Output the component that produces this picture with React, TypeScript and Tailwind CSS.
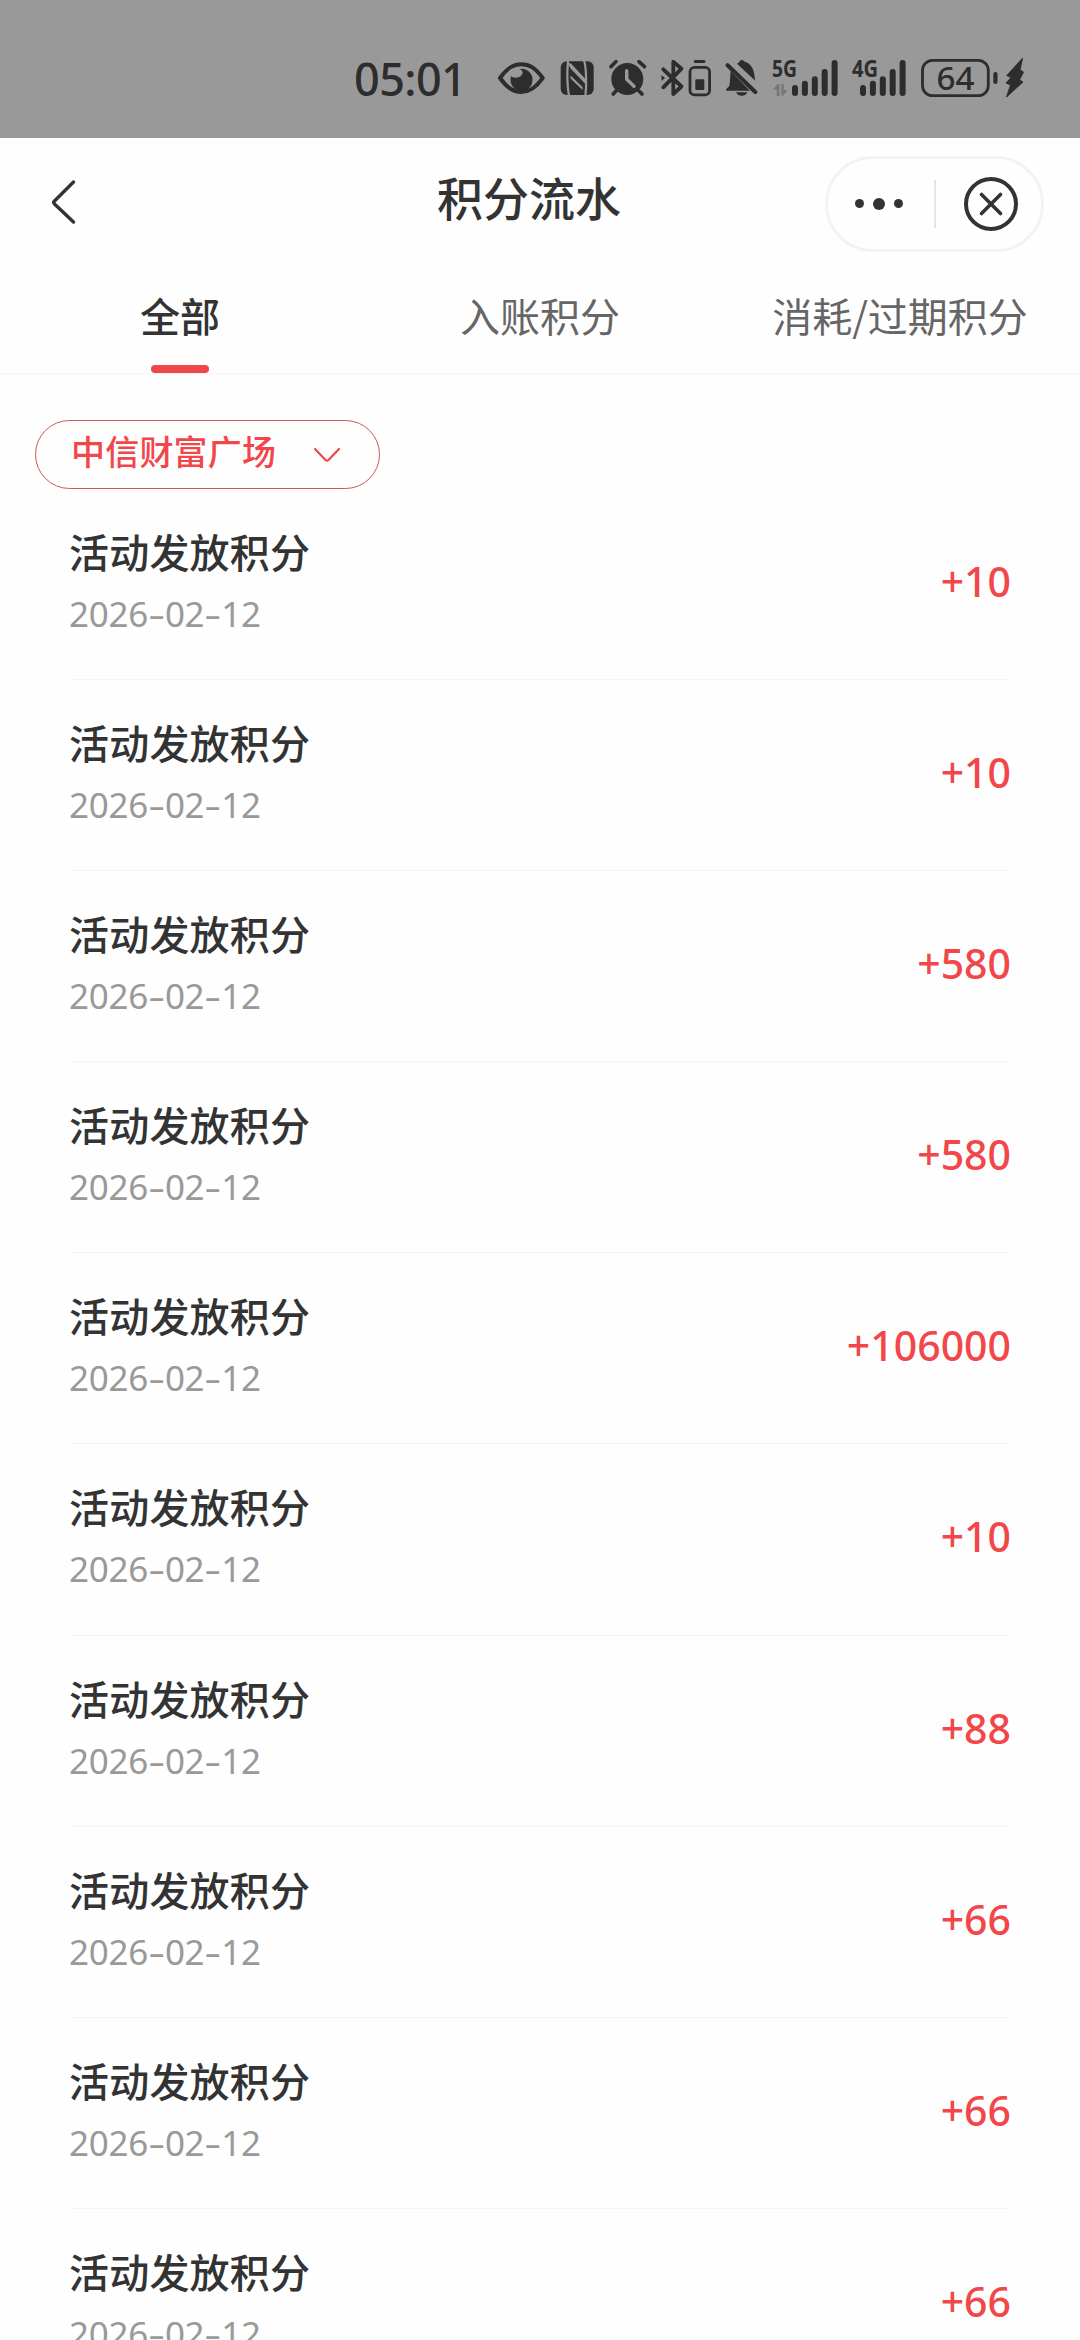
import React, { useState } from 'react';

const tabs = ['全部', '入账积分', '消耗/过期积分'];

const records = [
  { id: 1, title: '活动发放积分', date: '2026-02-12', amount: '+10' },
  { id: 2, title: '活动发放积分', date: '2026-02-12', amount: '+10' },
  { id: 3, title: '活动发放积分', date: '2026-02-12', amount: '+580' },
  { id: 4, title: '活动发放积分', date: '2026-02-12', amount: '+580' },
  { id: 5, title: '活动发放积分', date: '2026-02-12', amount: '+106000' },
  { id: 6, title: '活动发放积分', date: '2026-02-12', amount: '+10' },
  { id: 7, title: '活动发放积分', date: '2026-02-12', amount: '+88' },
  { id: 8, title: '活动发放积分', date: '2026-02-12', amount: '+66' },
  { id: 9, title: '活动发放积分', date: '2026-02-12', amount: '+66' },
  { id: 10, title: '活动发放积分', date: '2026-02-12', amount: '+66' },
];

const barTops = [27, 22.7, 18.3, 11, 2];

const SignalBars = ({ start }: { start: number }) => (
  <>
    {barTops.map((top, i) => (
      <rect key={top} x={start + i * 9.9} y={top} width="6" height={38 - top} rx="3" />
    ))}
  </>
);

const StatusBar = () => (
  <div className="flex h-[138px] shrink-0 items-start bg-[#999999] pt-[58px] text-[#2d2d2d]">
    <span className="ml-[354px] w-[143px] whitespace-nowrap font-['Noto_Sans'] text-[45px] leading-[41px] font-medium tracking-[-0.6px]">05:01</span>

    {/* eye comfort */}
    <svg width="48" height="40" viewBox="0 0 48 40" fill="none">
      <path d="M3 20C10 10 16 6.2 24.3 6.2S38.5 10 45.7 20C38.5 30 32.5 34 24.3 34S10 30 3 20Z" stroke="currentColor" strokeWidth="4" strokeLinejoin="round" />
      <path d="M22.5 11A11 11 0 1 1 13.7 20V18C17 21 24 20 25.5 15.5C26 13.5 25 12 22.5 11Z" fill="currentColor" />
    </svg>

    {/* nfc */}
    <svg className="ml-[15px]" width="34" height="40" viewBox="0 0 34 40" fill="none">
      <rect x="0.7" y="3.3" width="33" height="33.7" rx="6" fill="currentColor" />
      <path d="M8 3C7.200 12 7.200 28 9 38M24 2C26.500 10 26.500 28 25.500 37" stroke="#999999" strokeWidth="2.2" />
      <path d="M8 5L11 5.500L25 20.500V25.500L10.500 10.500ZM10.500 17.500L22.500 29V32L10.500 20.500Z" fill="#999999" />
    </svg>

    {/* alarm */}
    <svg className="ml-[14px]" width="40" height="40" viewBox="0 0 40 40" fill="none" strokeLinecap="round" strokeLinejoin="round">
      <circle cx="19.3" cy="21" r="16" fill="currentColor" />
      <path d="M2.9 8.7L8 3.6M30.9 3.6L36.5 8.7M8 33L5.2 36M31 33L34 36" stroke="currentColor" strokeWidth="3.6" />
      <path d="M18.7 12.7V21.3L26 28.3" stroke="#999999" strokeWidth="3.4" />
    </svg>

    {/* bluetooth device battery */}
    <svg className="ml-[12px]" width="52" height="40" viewBox="0 0 52 40" fill="none" strokeLinecap="round" strokeLinejoin="round">
      <path d="M3.3 11.3L21.5 28.5L13.3 36V24M3.3 29.3L21.5 10.7L13.3 3.7V16" stroke="currentColor" strokeWidth="3.8" />
      <path d="M1.5 17V23L5 20Z" fill="currentColor" />
      <rect x="30" y="9.3" width="19.6" height="27.6" rx="4.5" stroke="currentColor" strokeWidth="2.8" />
      <path d="M35.3 3.4H44" stroke="currentColor" strokeWidth="3" />
      <rect x="35.3" y="21.3" width="9" height="10.7" rx="1" fill="currentColor" />
    </svg>

    {/* muted bell */}
    <svg className="ml-[13px]" width="34" height="40" viewBox="0 0 34 40" fill="currentColor">
      <path d="M5.5 13L25 32.8H1.2V31L4.3 28C5.2 23 5.3 18 5.5 13ZM12 5.8C13.5 4.6 14.5 4 14.8 3C15.5 1.7 18 1.7 19 3.2C26 5.5 29.6 10.5 30 22.5ZM11 34.3H22.3C20.5 39 13 39 11 34.3Z" />
      <path d="M2.6 7.2L30.3 34" stroke="currentColor" strokeWidth="4" strokeLinecap="round" />
    </svg>

    {/* sim 1 */}
    <svg className="ml-[13px] overflow-visible" width="68" height="40" viewBox="0 0 68 40" fill="currentColor">
      <text x="0" y="19.3" fontFamily="Noto Sans" fontWeight="700" fontSize="23" textLength="25" lengthAdjust="spacingAndGlyphs">5G</text>
      <path d="M1 31.5L5.5 26H7.5V38H4.7V31.5ZM9.3 26H11.8V32H15.5L11.5 37.5H9.3Z" fill="#777777" />
      <SignalBars start={20} />
    </svg>

    {/* sim 2 */}
    <svg className="ml-[12px] overflow-visible" width="56" height="40" viewBox="0 0 56 40" fill="currentColor">
      <text x="0" y="19.3" fontFamily="Noto Sans" fontWeight="700" fontSize="23" textLength="26" lengthAdjust="spacingAndGlyphs">4G</text>
      <SignalBars start={8} />
    </svg>

    {/* charging battery */}
    <svg className="ml-[12px] overflow-visible" width="106" height="40" viewBox="0 0 106 40" fill="currentColor">
      <rect x="2.5" y="2.3" width="65.8" height="35.4" rx="10" fill="none" stroke="currentColor" strokeWidth="2.8" />
      <rect x="73.3" y="14" width="4.2" height="12" rx="2" />
      <text x="16.5" y="32" fontFamily="Noto Sans" fontWeight="500" fontSize="33" textLength="38" lengthAdjust="spacingAndGlyphs">64</text>
      <path d="M102.5 0.3L86.8 17.5L91 19.5L86 25L90.5 27L86.5 39L103 24L99.5 22L103.5 14L100 12Z" stroke="currentColor" strokeLinejoin="round" />
    </svg>
  </div>
);

const NavBar = () => (
  <div className="mt-1 flex h-[124px] shrink-0 items-center border-t border-[#fafafa] pr-9 pb-[2px]">
    <button type="button" aria-label="返回" className="flex w-[401px] pb-1 pl-[48px]">
      <svg width="32" height="50" viewBox="0 0 32 50" fill="none" stroke="#333333" strokeWidth="3.4" strokeLinecap="round" strokeLinejoin="round">
        <path d="M25.5 5L6.5 24Q5 25.5 6.5 27L25.5 45" />
      </svg>
    </button>
    <h1 className="w-[256px] pb-[11px] text-center text-[46px] leading-[60px] font-medium text-[#333333]">积分流水</h1>
    <div className="ml-auto flex h-[96px] w-[219px] items-center rounded-full border-[3px] border-[#f3f3f3]">
      <button type="button" aria-label="更多" className="flex w-[106px] items-center justify-center gap-[9px] pr-1">
        <span className="size-[9px] rounded-full bg-[#333333]" />
        <span className="size-3 rounded-full bg-[#333333]" />
        <span className="size-[9px] rounded-full bg-[#333333]" />
      </button>
      <span className="h-12 w-[2px] bg-[#e5e5e5]" />
      <button type="button" aria-label="关闭" className="ml-[27px]">
        <svg width="56" height="56" viewBox="0 0 56 56" fill="none" stroke="#333333" strokeLinecap="round">
          <circle cx="28" cy="28" r="25" strokeWidth="4" />
          <path d="M18.5 18.5L37.5 37.5M37.5 18.5L18.5 37.5" strokeWidth="3.6" />
        </svg>
      </button>
    </div>
  </div>
);

const RecordDate = ({ date }: { date: string }) => (
  <p className="mt-[7px] text-[35px] leading-[56px] tracking-[-0.3px] text-[#999999]">
    {date.split('-').map((part, i) => (
      <React.Fragment key={i}>
        {i > 0 && <span className="inline-block w-[17px] origin-center scale-x-150 text-center">-</span>}
        {part}
      </React.Fragment>
    ))}
  </p>
);

const App = () => {
  const [activeTab, setActiveTab] = useState(0);

  return (
    <div className="flex h-[2340px] w-[1080px] flex-col overflow-hidden bg-[#fefefe] font-['Noto_Sans','Noto_Sans_CJK_SC',sans-serif]">
      <StatusBar />
      <NavBar />

      {/* Tabs */}
      <div className="flex h-[108px] shrink-0 border-b border-[#f5f5f5]">
        {tabs.map((tab, i) => (
          <button
            key={tab}
            type="button"
            onClick={() => setActiveTab(i)}
            className={`flex w-[360px] flex-col items-center justify-between pt-[21px] text-[40px] leading-[56px] font-['Noto_Sans_CJK_SC',sans-serif] ${
              i === activeTab ? 'font-medium text-[#333333]' : 'text-[#666666]'
            }`}
          >
            {tab}
            {i === activeTab && <span className="h-2 w-[58px] rounded-full bg-[#f2474a]" />}
          </button>
        ))}
      </div>

      {/* Mall picker */}
      <button
        type="button"
        className="mt-[46px] ml-[35px] flex h-[69px] w-[345px] shrink-0 items-center rounded-full border border-[#cf5559] pl-[35px] text-[34px] leading-[48px] font-medium text-[#f2474a]"
      >
        <span className="pb-[5px] tracking-[0.2px]">中信财富广场</span>
        <svg className="ml-[37px]" width="28" height="16" viewBox="0 0 28 16" fill="none" stroke="#f2474a" strokeWidth="2.2" strokeLinecap="round" strokeLinejoin="round">
          <path d="M2 2L12.5 13Q14 14.5 15.5 13L26 2" />
        </svg>
      </button>

      {/* Records */}
      <ul className="flex flex-col pr-[69px] pl-[69px]">
        {records.map((item) => (
          <li key={item.id} className="flex h-[191.1px] shrink-0 justify-between border-b border-[#f5f5f5]">
            <div className="pt-[34px]">
              <p className="text-[40px] leading-[56px] font-medium tracking-[0.2px] text-[#333333] font-['Noto_Sans_CJK_SC',sans-serif]">{item.title}</p>
              <RecordDate date={item.date} />
            </div>
            <span className="pt-[64px] text-[41px] leading-[56px] font-medium text-[#f2474a]">{item.amount}</span>
          </li>
        ))}
      </ul>
    </div>
  );
};

export default App;
